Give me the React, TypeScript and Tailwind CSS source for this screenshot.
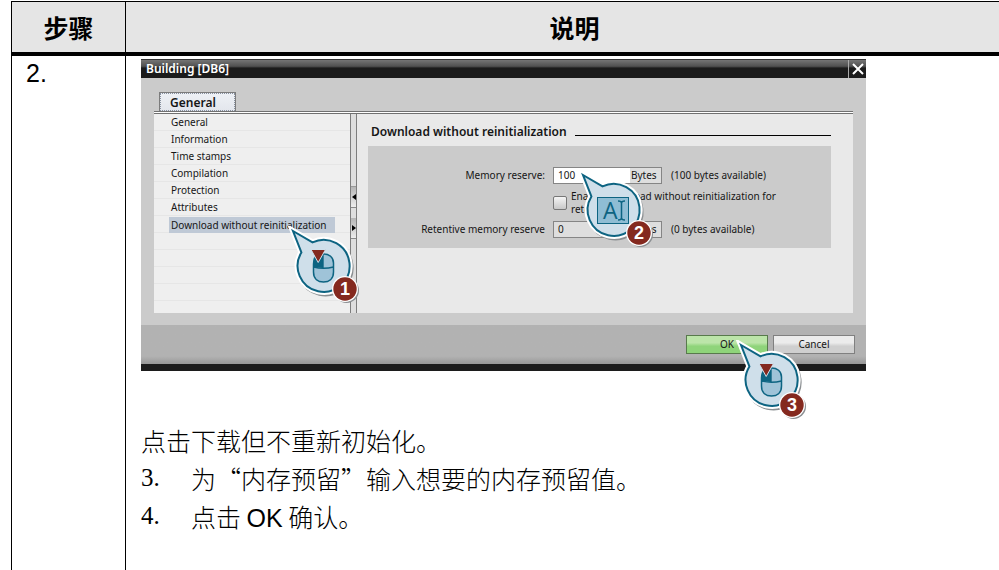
import type { ReactNode } from "react";

const navItems = [
  "General",
  "Information",
  "Time stamps",
  "Compilation",
  "Protection",
  "Attributes",
  "Download without reinitialization",
];

type CalloutProps = {
  className: string;
  number: number;
  badgeX: number;
  badgeY: number;
  children: ReactNode;
};

function Callout({ className, number, badgeX, badgeY, children }: CalloutProps) {
  const shape = "M5 5 L24.5 16.4 A26 26 0 1 1 13.4 26.4 Z";
  return (
    <svg
      className={`pointer-events-none absolute z-10 h-[80px] w-[80px] ${className}`}
      viewBox="0 0 80 80"
      fill="none"
      aria-label={`Step ${number}`}
    >
      <path d={shape} transform="translate(1.5 2)" stroke="#8b8f92" strokeWidth="5" strokeLinejoin="round" />
      <path d={shape} stroke="#fff" strokeWidth="6" />
      <path d={shape} fill="#cfdfea" stroke="#0d6482" strokeWidth="2" />
      {children}
      <circle cx={badgeX + 1.5} cy={badgeY + 1.5} r="12.5" fill="#8b8f92" />
      <circle cx={badgeX} cy={badgeY} r="13" fill="#fff" />
      <circle cx={badgeX} cy={badgeY} r="11.7" fill="#84291f" />
      <text
        x={badgeX}
        y={badgeY + 6}
        textAnchor="middle"
        fill="#fff"
        className="font-['Liberation_Sans',sans-serif] text-[18px] font-bold"
      >
        {number}
      </text>
    </svg>
  );
}

function MouseDrawing() {
  return (
    <g>
      <path
        d="M25.500 38 C25.500 30 30 28 35.500 28 C41 28 45.500 31 45.500 37 V46 C45.500 53 41 56 35.500 56 C30 56 25.500 53 25.500 46 Z"
        fill="#9fc3d8"
        stroke="#0d6482"
        strokeWidth="1.5"
      />
      <path d="M25.500 41 V37 C26 31 30 28 35 28 V42 Z" fill="#0d6482" />
      <path d="M25.500 41 Q35.500 43.500 45.500 41 M35 28 V42" stroke="#0d6482" strokeWidth="1.4" />
      <path d="M23 23.500 H37.500 L30.200 36.500 Z" fill="#84291f" stroke="#cfdfea" strokeWidth="1" />
    </g>
  );
}

function TextEntryDrawing() {
  return (
    <g>
      <rect x="19.5" y="27.5" width="31" height="26" fill="#8fbdd4" stroke="#0d6482" strokeWidth="1" />
      <text x="25" y="49" fill="#0d6482" className="font-['Open_Sans',sans-serif] text-[23px]">
        A
      </text>
      <path d="M40 31 Q43.500 31 43.500 33 Q43.500 31 47 31 M43.500 33 V48 M40 50 Q43.500 50 43.500 48 Q43.500 50 47 50" stroke="#0d6482" strokeWidth="1.5" />
    </g>
  );
}

function Splitter() {
  return (
    <div className="flex w-[7px] shrink-0 flex-col border-x border-[#7d7d7d] bg-[#dedede]">
      <div className="h-[73px] border-b border-[#999]" />
      <button aria-label="Collapse" className="flex h-[21px] items-center justify-center border-b border-[#888] bg-linear-to-b from-[#b5b5b5] to-[#ededed]">
        <svg viewBox="0 0 4 6" className="h-[6px] w-[4px]"><path d="M4 0 L0 3 L4 6Z" /></svg>
      </button>
      <div className="h-[10px]" />
      <button aria-label="Expand" className="flex h-[21px] items-center justify-center border-b border-[#888] bg-linear-to-b from-[#b5b5b5] to-[#ededed]">
        <svg viewBox="0 0 4 6" className="h-[6px] w-[4px]"><path d="M0 0 L4 3 L0 6Z" /></svg>
      </button>
    </div>
  );
}

function Dialog() {
  return (
    <section
      aria-label="Building [DB6]"
      className="relative w-full max-w-[725px] bg-[#cbcbcb] font-['Noto_Sans',sans-serif] text-[10px] leading-[13px] text-[#161616]"
    >
      <header className="flex h-[19px] items-stretch justify-between border-t border-[#333] bg-linear-to-b from-[#757575] from-0% via-[#505050] via-35% to-[#1b1b1b] to-45% text-white">
        <h2 className="pl-[5px] text-[12px] leading-[18px] font-semibold">Building [DB6]</h2>
        <button aria-label="Close" className="flex w-[18px] items-center justify-center border-l border-[#aaa]">
          <svg viewBox="0 0 12 12" className="h-[12px] w-[12px]" fill="none" stroke="#fff" strokeWidth="2">
            <path d="M1 1 L11 11 M11 1 L1 11" />
          </svg>
        </button>
      </header>

      <div className="px-[13px] pt-[14px] pb-[12px]">
        <div role="tablist" className="px-[5px]">
          <button
            role="tab"
            aria-selected="true"
            className="block h-[19px] w-[77px] border border-b-0 border-[#7c7c7c] bg-linear-to-b from-[#eef1f6] to-[#e3e6ec]"
          >
            <span className="flex h-full items-center border border-dotted border-[#8891a0] pl-[9px] text-[12px] font-semibold">
              General
            </span>
          </button>
        </div>
        <div className="border-y border-[#707070] bg-white pt-px" />
        <div className="flex h-[199px] items-stretch">
          <nav className="relative w-[196px] shrink-0 bg-[#efefef]">
            <ul className="bg-[repeating-linear-gradient(to_bottom,#efefef_0px,#efefef_16px,#e6e6e6_16px,#e6e6e6_17px)] pb-[68px]">
              {navItems.map((item, index) => (
                <li key={item} className="flex h-[17px] items-center pl-[15px]">
                  <a href="#" className={index === 6 ? "w-[166px] bg-[#bfc9d6] px-[2px] leading-[16px] whitespace-nowrap" : "px-[2px]"}>
                    {item}
                  </a>
                </li>
              ))}
            </ul>
            <Callout className="top-[112px] left-[134px]" number={1} badgeX={57} badgeY={63}>
              <MouseDrawing />
            </Callout>
          </nav>
          <Splitter />
          <main className="min-w-0 flex-1 bg-[#e9e9e9] pt-[10px] pr-[22px] pl-[11px]">
            <div className="flex h-[14px] items-center gap-[8px] pl-[3px]">
              <h3 className="text-[12px] font-semibold whitespace-nowrap">Download without reinitialization</h3>
              <div className="mt-[9px] flex-1 border-t border-black" />
            </div>
            <form className="mt-[8px] flex h-[102px] flex-col bg-[#cbcbcb] pt-[21px]">
              <div className="flex h-[17px] items-center">
                <label htmlFor="memory" className="w-[177px] text-right">Memory reserve:</label>
                <div className="relative ml-[8px] flex h-[17px] w-[109px] border border-[#858585]">
                  <input id="memory" defaultValue="100" className="w-[76px] min-w-0 bg-white pl-[4px]" />
                  <span className="flex-1 bg-[#dedede] pl-px leading-[15px]">Bytes</span>
                  <Callout className="top-[2px] left-[24px]" number={2} badgeX={61} badgeY={63}>
                    <TextEntryDrawing />
                  </Callout>
                </div>
                <span className="ml-[9px]">(100 bytes available)</span>
              </div>
              <div className="mt-[5px] flex h-[28px] items-center pl-[185px]">
                <input
                  id="enable"
                  type="checkbox"
                  className="h-[14px] w-[14px] shrink-0 appearance-none rounded-[2px] border border-[#777] bg-linear-to-b from-[#f5f5f5] to-[#c8c8c8]"
                />
                <label htmlFor="enable" className="pl-[4px]">
                  Enable download without reinitialization for
                  <br />
                  retentive tags.
                </label>
              </div>
              <div className="mt-[4px] flex h-[17px] items-center">
                <label htmlFor="retentive" className="w-[177px] text-right">Retentive memory reserve</label>
                <div className="ml-[8px] flex h-[17px] w-[109px] border border-[#858585]">
                  <input id="retentive" defaultValue="0" readOnly className="w-[76px] min-w-0 bg-[#dedede] pl-[4px]" />
                  <span className="flex-1 bg-[#dedede] pl-px leading-[15px]">Bytes</span>
                </div>
                <span className="ml-[9px]">(0 bytes available)</span>
              </div>
            </form>
          </main>
        </div>
      </div>

      <footer className="flex h-[46px] items-start justify-end gap-[5px] border-b-7 border-[#1c1c1c] bg-linear-to-b from-[#b2b2b2] from-80% to-[#989898] pt-[10px] pr-[11px]">
        <div className="relative">
          <button className="h-[19px] w-[82px] border border-[#587a4c] bg-linear-to-b from-[#bce5a9] from-40% to-[#8fd47a] to-60% pb-px">OK</button>
          <Callout className="top-[5px] left-[50px]" number={3} badgeX={56} badgeY={65}>
            <MouseDrawing />
          </Callout>
        </div>
        <button className="h-[19px] w-[82px] border border-[#808080] bg-linear-to-b from-[#ececec] from-40% to-[#cfcfcf] to-60% pb-px">Cancel</button>
      </footer>
    </section>
  );
}

export default function App() {
  return (
    <div className="min-h-screen overflow-hidden bg-white pt-px pl-[11px] text-black">
      <table className="h-[calc(100vh-1px)] w-full table-fixed border-separate border-spacing-0">
        <colgroup>
          <col className="w-[114px]" />
          <col />
        </colgroup>
        <thead>
          <tr className="h-[55px] bg-[#e5e5e5] font-['Noto_Sans_CJK_SC',sans-serif] text-[25px] leading-[38px]">
            <th className="border-t border-b-4 border-l border-black p-0 font-bold">步骤</th>
            <th className="border-t border-b-4 border-l border-black p-0 pl-[24px] font-bold">说明</th>
          </tr>
        </thead>
        <tbody>
          <tr className="align-top">
            <td className="border-l border-black p-0 pl-[14px] font-['Liberation_Sans',sans-serif] text-[25px] leading-[34px]">2.</td>
            <td className="border-l border-black p-0 pt-[3px] pl-[15px]">
              <Dialog />
              <div className="mt-[50px] font-['Noto_Sans_CJK_SC',sans-serif] text-[25px] leading-[38px] font-light">
                <p>点击下载但不重新初始化。</p>
                <ol>
                  <li className="flex">
                    <span className="w-[50px] shrink-0 font-['Liberation_Serif',serif]">3.</span>
                    <span>为“内存预留”输入想要的内存预留值。</span>
                  </li>
                  <li className="flex">
                    <span className="w-[50px] shrink-0 font-['Liberation_Serif',serif]">4.</span>
                    <span>
                      点击 <span className="font-['Liberation_Sans',sans-serif]">OK</span> 确认。
                    </span>
                  </li>
                </ol>
              </div>
            </td>
          </tr>
        </tbody>
      </table>
    </div>
  );
}
